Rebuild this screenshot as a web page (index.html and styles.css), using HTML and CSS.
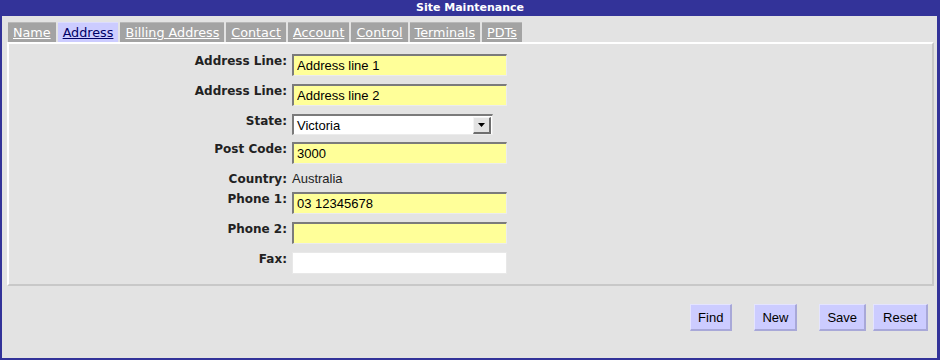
FILE: index.html
```html
<!DOCTYPE html>
<html lang="en">
<head>
    <meta charset="UTF-8">
    <title>Site Maintenance</title>
    <link rel="stylesheet" href="styles.css">
</head>
<body>
    <div class="window">
        <div class="titlebar">Site Maintenance</div>

        <ul class="tabs">
            <li><a href="#name">Name</a></li>
            <li class="active"><a href="#address">Address</a></li>
            <li><a href="#billing">Billing Address</a></li>
            <li><a href="#contact">Contact</a></li>
            <li><a href="#account">Account</a></li>
            <li><a href="#control">Control</a></li>
            <li><a href="#terminals">Terminals</a></li>
            <li><a href="#pdts">PDTs</a></li>
        </ul>

        <div class="panel">
            <form class="site-form">
                <div class="row">
                    <label for="addr1">Address Line:</label>
                    <input type="text" id="addr1" class="required" value="Address line 1">
                </div>
                <div class="row">
                    <label for="addr2">Address Line:</label>
                    <input type="text" id="addr2" class="required" value="Address line 2">
                </div>
                <div class="row row-select">
                    <label>State:</label>
                    <div class="select">
                        <span class="select-value">Victoria</span>
                        <span class="select-arrow">
                            <svg width="7" height="4" viewBox="0 0 7 4"><path d="M0 0h7L3.5 4z" fill="#000"/></svg>
                        </span>
                    </div>
                </div>
                <div class="row">
                    <label for="postcode">Post Code:</label>
                    <input type="text" id="postcode" class="required" value="3000">
                </div>
                <div class="row row-text">
                    <label>Country:</label>
                    <span class="static">Australia</span>
                </div>
                <div class="row">
                    <label for="phone1">Phone 1:</label>
                    <input type="text" id="phone1" class="required" value="03 12345678">
                </div>
                <div class="row">
                    <label for="phone2">Phone 2:</label>
                    <input type="text" id="phone2" class="required" value="">
                </div>
                <div class="row">
                    <label for="fax">Fax:</label>
                    <input type="text" id="fax" class="plain" value="">
                </div>
            </form>
        </div>

        <div class="actions">
            <button type="button" class="btn">Find</button>
            <button type="button" class="btn">New</button>
            <div class="btn-group">
                <button type="button" class="btn">Save</button>
                <button type="button" class="btn btn-wide">Reset</button>
            </div>
        </div>
    </div>
</body>
</html>
```

FILE: styles.css
```css
* {
    box-sizing: border-box;
    margin: 0;
    padding: 0;
}

body {
    background-color: #e3e3e3;
    font-family: 'DejaVu Sans', Verdana, sans-serif;
    color: #000;
}

.window {
    width: 940px;
    height: 360px;
    border: 2px solid #333399;
    border-top: none;
    border-right-width: 3px;
    background-color: #e3e3e3;
}

.titlebar {
    height: 16px;
    margin: 0 -3px 0 -2px;
    background-color: #333399;
    color: #fff;
    font-size: 11px;
    font-weight: bold;
    line-height: 16px;
    text-align: center;
}

.tabs {
    list-style: none;
    display: flex;
    gap: 2px;
    margin: 6px 0 0 6px;
    height: 20px;
}

.tabs li {
    background-color: #a3a3a3;
    border-top: 1px solid #b8b8b8;
}

.tabs li a {
    display: block;
    padding: 0 5px;
    color: #fff;
    font-size: 12.75px;
    line-height: 19px;
}

.tabs li.active {
    background-color: #ccccff;
    border-top-color: #dcdcff;
}

.tabs li.active a {
    color: #000066;
}

.panel {
    margin: 0 3px 0 5px;
    height: 244px;
    border-top: 2px solid #fff;
    border-left: 2px solid #fff;
    border-right: 2px solid #c8c8c8;
    border-bottom: 2px solid #c8c8c8;
    padding-top: 10px;
}

.row {
    display: flex;
    align-items: flex-start;
    gap: 5px;
    margin-bottom: 8px;
}

.row label {
    width: 278px;
    text-align: right;
    font-size: 12px;
    font-weight: bold;
    line-height: 14px;
    color: #222;
}

.row input[type="text"] {
    width: 215px;
    height: 22px;
    padding: 0 3px;
    border-top: 2px solid #7b7b7b;
    border-left: 2px solid #7b7b7b;
    border-right: 1px solid #ececec;
    border-bottom: 1px solid #ececec;
    background-color: #fff;
    font-family: 'Liberation Sans', Arial, sans-serif;
    font-size: 13px;
    color: #000;
    outline: none;
}

.row input.required {
    background-color: #ffff99;
}

.row input.plain {
    border: 1px solid #e8e8e8;
}

.row-select {
    margin-bottom: 7px;
}

.select {
    display: flex;
    align-items: center;
    justify-content: space-between;
    width: 201px;
    height: 21px;
    padding: 0 1px 0 3px;
    border-top: 2px solid #7b7b7b;
    border-left: 2px solid #7b7b7b;
    border-right: 1px solid #ececec;
    border-bottom: 1px solid #ececec;
    background-color: #fff;
    font-family: 'Liberation Sans', Arial, sans-serif;
    font-size: 13px;
}

.select-arrow {
    display: flex;
    align-items: center;
    justify-content: center;
    width: 18px;
    height: 17px;
    border-top: 1px solid #f4f4f4;
    border-left: 1px solid #f4f4f4;
    border-right: 2px solid #6e6e6e;
    border-bottom: 2px solid #6e6e6e;
    background-color: #e3e3e3;
}

.row-text {
    height: 14px;
    margin-bottom: 6px;
}

.static {
    font-family: 'Liberation Sans', Arial, sans-serif;
    font-size: 13px;
    line-height: 14px;
    color: #222;
}

.actions {
    display: flex;
    justify-content: flex-end;
    gap: 22px;
    margin: 18px 9px 0 0;
}

.btn-group {
    display: flex;
    gap: 7px;
}

.btn {
    height: 27px;
    padding: 0 7px;
    background-color: #ccccff;
    border-top: 1px solid #e4e4ff;
    border-left: 1px solid #e4e4ff;
    border-right: 2px solid #a8a8d8;
    border-bottom: 2px solid #a8a8d8;
    font-family: 'Liberation Sans', Arial, sans-serif;
    font-size: 13px;
    color: #000;
    cursor: pointer;
}

.btn-wide {
    padding: 0 9px;
}
```
